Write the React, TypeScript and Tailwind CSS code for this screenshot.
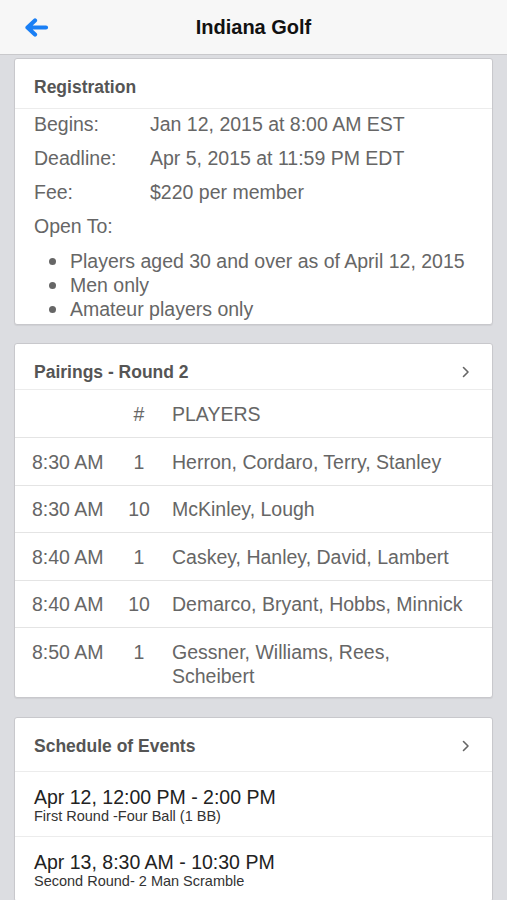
import React from 'react'

const registration = [
  { label: 'Begins:', value: 'Jan 12, 2015 at 8:00 AM EST' },
  { label: 'Deadline:', value: 'Apr 5, 2015 at 11:59 PM EDT' },
  { label: 'Fee:', value: '$220 per member' },
]

const openTo = ['Players aged 30 and over as of April 12, 2015', 'Men only', 'Amateur players only']

const pairings = [
  { time: '8:30 AM', hole: '1', players: 'Herron, Cordaro, Terry, Stanley' },
  { time: '8:30 AM', hole: '10', players: 'McKinley, Lough' },
  { time: '8:40 AM', hole: '1', players: 'Caskey, Hanley, David, Lambert' },
  { time: '8:40 AM', hole: '10', players: 'Demarco, Bryant, Hobbs, Minnick' },
  { time: '8:50 AM', hole: '1', players: 'Gessner, Williams, Rees, Scheibert' },
]

const events = [
  { when: 'Apr 12, 12:00 PM - 2:00 PM', name: 'First Round -Four Ball (1 BB)' },
  { when: 'Apr 13, 8:30 AM - 10:30 PM', name: 'Second Round- 2 Man Scramble' },
]

function Chevron() {
  return (
    <svg width="8" height="12" viewBox="0 0 8 12" className="mr-[22px]">
      <path d="M1.5 1.5 L6 6 L1.5 10.5" fill="none" stroke="#666" strokeWidth="1.6" strokeLinecap="round" strokeLinejoin="round" />
    </svg>
  )
}

function CardHeader({ title, chevron, className }: { title: string; chevron?: boolean; className: string }) {
  return (
    <div className={`flex items-center justify-between border-b border-[#ececec] pl-[19px] ${className}`}>
      <h2 className="text-[17.5px] leading-[20px] font-bold text-[#555]">{title}</h2>
      {chevron && <Chevron />}
    </div>
  )
}

export default function App() {
  return (
    <div className="min-h-[900px] bg-[#dcdde1] pb-6" style={{ fontFamily: '"Liberation Sans", Arial, sans-serif' }}>
      {/* Barre de navigation */}
      <header className="relative flex h-[55px] items-center justify-center border-b border-[#c9c9cc] bg-[#f7f7f7]">
        <button className="absolute left-[24px] top-[18px]">
          <svg width="25" height="19" viewBox="0 0 25 19">
            <path d="M22 9.5 H5 M11 2.5 L3.5 9.5 L11 16.5" fill="none" stroke="#1a7ff5" strokeWidth="4.2" strokeLinecap="round" strokeLinejoin="round" />
          </svg>
        </button>
        <h1 className="text-[20px] font-bold text-[#111]">Indiana Golf</h1>
      </header>

      {/* Registration */}
      <section className="mx-[14px] mt-[3px] rounded-[3px] border border-[#c8c8cc] bg-white shadow-[0_1px_1px_rgba(0,0,0,0.06)]">
        <CardHeader title="Registration" className="pt-[18px] pb-[11px]" />
        <div className="pl-[19px] pb-[3px] text-[19.5px] text-[#666]">
          <div className="flex flex-col gap-[4px]">
            {registration.map((r) => (
              <div key={r.label} className="flex leading-[30px]">
                <span className="w-[116px]">{r.label}</span>
                <span>{r.value}</span>
              </div>
            ))}
            <div className="leading-[30px]">Open To:</div>
          </div>
          <ul className="mt-[8px]">
            {openTo.map((o) => (
              <li key={o} className="flex items-center leading-[24px]">
                <span className="ml-[15px] mr-[14px] h-[7px] w-[7px] rounded-full bg-[#666]" />
                {o}
              </li>
            ))}
          </ul>
        </div>
      </section>

      {/* Pairings */}
      <section className="mx-[14px] mt-[18px] rounded-[3px] border border-[#c8c8cc] bg-white shadow-[0_1px_1px_rgba(0,0,0,0.06)]">
        <CardHeader title="Pairings - Round 2" chevron className="pt-[18px] pb-[7px]" />
        <div className="text-[19.5px] leading-[24px] text-[#666]">
          <div className="flex border-b border-[#e4e4e4] pl-[17px] pt-[12px] pb-[11px]">
            <span className="w-[86px]" />
            <span className="w-[42px] text-center">#</span>
            <span className="pl-[12px]">PLAYERS</span>
          </div>
          {pairings.map((p, i) => (
            <div
              key={i}
              className={`flex pl-[17px] pt-[11.5px] ${i < pairings.length - 1 ? 'border-b border-[#e4e4e4] pb-[11px]' : 'pb-[9px]'}`}
            >
              <span className="w-[86px] shrink-0">{p.time}</span>
              <span className="w-[42px] shrink-0 text-center">{p.hole}</span>
              <span className="flex-1 pl-[12px] pr-[20px]">{p.players}</span>
            </div>
          ))}
        </div>
      </section>

      {/* Schedule of Events */}
      <section className="mx-[14px] mt-[19px] rounded-[3px] border border-[#c8c8cc] bg-white shadow-[0_1px_1px_rgba(0,0,0,0.06)]">
        <CardHeader title="Schedule of Events" chevron className="pt-[18px] pb-[15px]" />
        {events.map((e, i) => (
          <div key={i} className={`pl-[19px] pt-[14px] pb-[12px] ${i < events.length - 1 ? 'border-b border-[#ececec]' : ''}`}>
            <div className="text-[19.5px] leading-[22px] text-[#222]">{e.when}</div>
            <div className="text-[14.5px] leading-[16px] text-[#333]">{e.name}</div>
          </div>
        ))}
      </section>
    </div>
  )
}
